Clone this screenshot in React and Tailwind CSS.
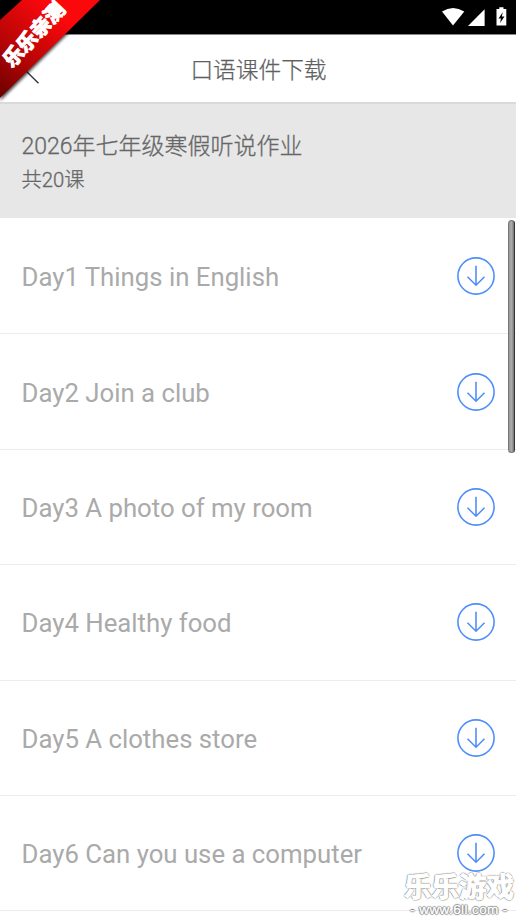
const lessons = [
  "Day1 Things in English",
  "Day2 Join a club",
  "Day3 A photo of my room",
  "Day4 Healthy food",
  "Day5 A clothes store",
  "Day6 Can you use a computer",
];

function DownloadIcon() {
  return (
    <svg width="38" height="38" viewBox="0 0 38 38" fill="none" stroke="#4f8ffb" strokeWidth="1.6">
      <circle cx="19" cy="19" r="18.1" />
      <path d="M19 8.8V28.2M10.5 19.8L19 28.2L27.5 19.8" />
    </svg>
  );
}

function StatusBar() {
  return (
    <div className="h-[35px] shrink-0 bg-black border-b border-[#888] flex justify-end">
      <svg width="80" height="34" viewBox="436 0 80 34" fill="#fff">
        <path d="M442 11.5Q453 4.500 464.300 11.500L453 25.500Z" />
        <path d="M484.600 9.300V26H468Z" />
        <path d="M496.500 9H499.300V7.300H503.500V9H506.300V25.500H496.500Z" />
        <path d="M502.800 12L498.600 18.400H501L500 23L504.500 16.500H501.800Z" fill="#000" />
      </svg>
    </div>
  );
}

function Ribbon() {
  return (
    <div className="absolute left-0 top-0 w-[110px] h-[110px]">
      <svg className="absolute inset-0" width="110" height="110">
        <defs>
          <linearGradient id="ribbon" gradientUnits="userSpaceOnUse" x1="0" y1="99" x2="66" y2="20">
            <stop offset="0" stopColor="#690000" />
            <stop offset="0.45" stopColor="#b50505" />
            <stop offset="1" stopColor="#fb080c" />
          </linearGradient>
          <filter id="shade"><feGaussianBlur stdDeviation="1.5" /></filter>
        </defs>
        <path d="M20 2L100 2L0 101Z" fill="#000" opacity=".7" filter="url(#shade)" />
        <path d="M0 20L22 0H100L0 98Z" fill="url(#ribbon)" />
      </svg>
      <div className="absolute left-[-7px] top-[23px] w-[80px] h-[21px] flex items-center justify-center -rotate-[47deg] text-[20px] leading-none font-bold text-white whitespace-nowrap [-webkit-text-stroke:1.2px_white] font-['Noto_Sans_CJK_SC',sans-serif]">
        乐乐亲测
      </div>
    </div>
  );
}

function Watermark() {
  return (
    <div className="absolute left-[402px] top-[873px] w-[114px] flex flex-col items-center whitespace-nowrap text-white font-['Liberation_Sans','Noto_Sans_CJK_SC',sans-serif]">
      <div className="text-[27.500px] leading-[30px] font-bold [-webkit-text-stroke:1.2px_white] [text-shadow:1px_0_1px_#777,-1px_0_1px_#777,0_1px_1px_#777,0_-1px_1px_#777]">乐乐游戏</div>
      <div className="text-[13.500px] leading-[14px] tracking-[0.4px] [text-shadow:1px_0_1px_#777,-1px_0_1px_#777,0_1px_1px_#777,0_-1px_1px_#777] [-webkit-text-stroke:0.4px_white]">- www.6ll.com -</div>
    </div>
  );
}

export default function App() {
  return (
    <div className="relative w-[516px] h-[919px] overflow-hidden bg-white flex flex-col font-['Roboto','Noto_Sans_CJK_SC',sans-serif]">
      <StatusBar />
      <header className="h-[69px] shrink-0 flex items-center border-b-2 border-[#dadada]">
        <svg className="shrink-0" width="50" height="36" viewBox="0 0 50 36" fill="none" stroke="#333744" strokeWidth="1.4">
          <path d="M38.500 32.300L24 18L38.500 4" />
        </svg>
        <h1 className="flex-1 pr-[49px] pt-1 text-center text-[22.700px] leading-8 font-light text-[#606060] [-webkit-text-stroke:0.25px_#606060]">口语课件下载</h1>
      </header>
      <section className="h-[114px] shrink-0 bg-[#e7e7e7] px-[21.500px] pt-[26px] text-[#666]">
        <h2 className="text-[23px] leading-[34px] font-light [-webkit-text-stroke:0.3px_#666]">2026年七年级寒假听说作业</h2>
        <p className="text-[20.300px] leading-[32px] font-light [-webkit-text-stroke:0.3px_#666]">共20课</p>
      </section>
      <ul className="shrink-0 pt-px">
        {lessons.map((lesson) => (
          <li key={lesson} className="h-[115.400px] border-b border-[#ececec] pl-[21.500px] pr-[21px] flex items-center justify-between">
            <span className="pt-[2px] text-[25.750px] leading-8 text-[#aaa]">{lesson}</span>
            <DownloadIcon />
          </li>
        ))}
      </ul>
      <div className="absolute left-[508px] top-[220px] w-[7px] h-[233px] rounded-full border border-[#777] border-r-[#333] bg-linear-to-r from-[#999] via-[#aaa] to-[#777]" />
      <Ribbon />
      <Watermark />
    </div>
  );
}
